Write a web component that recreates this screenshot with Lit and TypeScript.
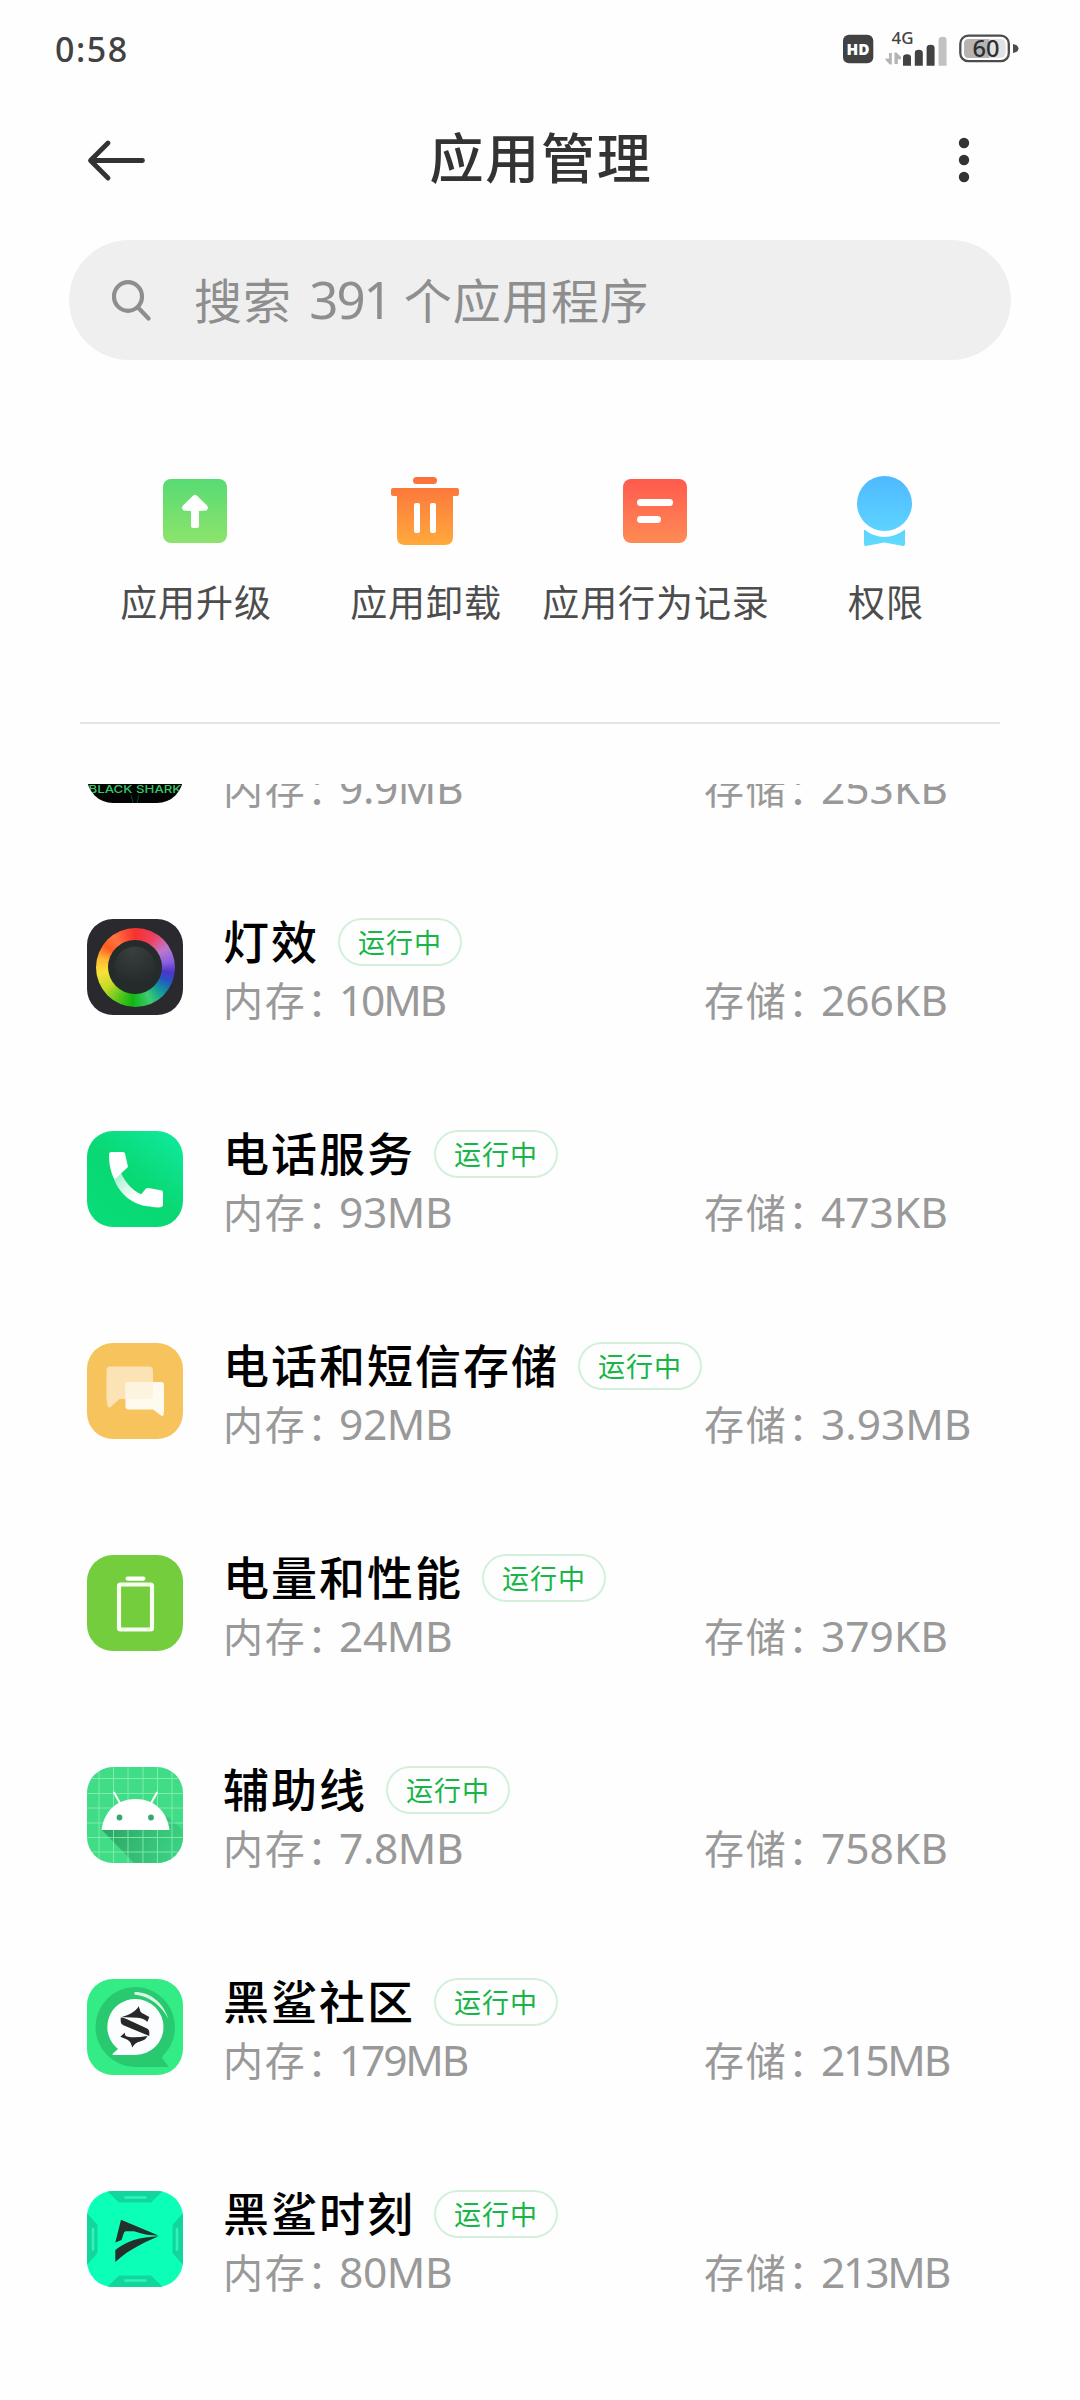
import { LitElement, html, css, svg, nothing } from "lit";
import { customElement, property } from "lit/decorators.js";

interface AppInfo {
  icon: string;
  name: string;
  memory: string;
  storage: string;
}

const APPS: AppInfo[] = [
  { icon: "shark", name: "", memory: "9.9MB", storage: "253KB" },
  { icon: "light", name: "灯效", memory: "10MB", storage: "266KB" },
  { icon: "phone", name: "电话服务", memory: "93MB", storage: "473KB" },
  { icon: "message", name: "电话和短信存储", memory: "92MB", storage: "3.93MB" },
  { icon: "battery", name: "电量和性能", memory: "24MB", storage: "379KB" },
  { icon: "android", name: "辅助线", memory: "7.8MB", storage: "758KB" },
  { icon: "community", name: "黑鲨社区", memory: "179MB", storage: "215MB" },
  { icon: "moment", name: "黑鲨时刻", memory: "80MB", storage: "213MB" },
];

const ICONS: Record<string, unknown> = {
  shark: svg`
    <rect width="96" height="96" fill="#020403"/>
    <path d="M44 88 L46 96 M52 88 L50 96" stroke="#0d4a20" stroke-width="1"/>
    <text x="48" y="86" text-anchor="middle" textLength="93" lengthAdjust="spacingAndGlyphs"
      font-family="Inter, sans-serif" font-weight="500" font-size="11" fill="#35c765">BLACK SHARK</text>`,
  light: svg`
    <defs>
      <radialGradient id="knob" cx="0.45" cy="0.1" r="0.8">
        <stop offset="0" stop-color="#393e3f"/><stop offset="1" stop-color="#252b2c"/>
      </radialGradient>
    </defs>
    <circle cx="48" cy="48" r="27" fill="#252a2b"/>
    <circle cx="48" cy="48" r="20.500" fill="url(#knob)"/>`,
  phone: svg`
    <defs>
      <linearGradient id="pbg" x1="0.2" y1="1" x2="1" y2="0">
        <stop offset="0" stop-color="#08dc78"/><stop offset="0.45" stop-color="#09d873"/><stop offset="1" stop-color="#10eba0"/>
      </linearGradient>
      <linearGradient id="ph" x1="30" y1="44" x2="50" y2="64" gradientUnits="userSpaceOnUse">
        <stop offset="0" stop-color="#a5f0d0"/><stop offset="1" stop-color="#fff"/>
      </linearGradient>
    </defs>
    <rect width="96" height="96" fill="url(#pbg)"/>
    <path d="M27 48 L34 42 C38 51 45 59 54 63.500 L62 75.500 C45 74 32 62 27 48Z" fill="url(#ph)"/>
    <path d="M24.500 21 Q22 21 22 23.500 C22 33 23.500 41 27.500 48.500 L41 36 L38 22.500 Q37.600 21 36 21Z" fill="#fff"/>
    <path d="M54 63.500 L59 57.500 Q60 56.600 61.500 57 L74 59.200 Q76 59.700 76 61.500 V74 Q76 76 73.500 76.300 Q66 76.800 59.500 74.500 L48 60Z" fill="#fff"/>`,
  message: svg`
    <rect width="96" height="96" fill="#f6c35c"/>
    <path d="M23 23.500 H62 Q66 23.500 66 27.500 V52 Q66 56 62 56 H32.500 L23 64.500 Q21 65 20.300 62 L19.500 55 V27.500 Q19.500 23.500 23 23.500Z" fill="#fbe3b5"/>
    <path d="M41.500 39 H74 Q77 39 77 42 L77 66 Q77 75 74.500 72.700 L66 66.500 H41.500 Q38.500 66.500 38.500 63.500 V42 Q38.500 39 41.500 39Z" fill="#fefaf0"/>
    <path d="M41.500 39 H66 V52 Q66 56 62 56 H38.500 V42 Q38.500 39 41.500 39Z" fill="#fdf4e0"/>`,
  battery: svg`
    <rect width="96" height="96" fill="#73cd3c"/>
    <rect x="38.500" y="21.500" width="20" height="4.200" rx="2.100" fill="#fff"/>
    <rect x="32" y="29.500" width="33" height="45" rx="1.500" fill="none" stroke="#f8fff2" stroke-width="4.200"/>`,
  android: svg`
    <defs><linearGradient id="ash" x1="20" y1="64" x2="80" y2="96" gradientUnits="userSpaceOnUse">
      <stop offset="0" stop-color="#2ea866"/><stop offset="1" stop-color="#3bd081"/>
    </linearGradient></defs>
    <rect width="96" height="96" fill="#40dc86"/>
    <path d="M15 63 L81 50 L96 63 V96 H47Z" fill="url(#ash)"/>
    <path d="M12 0V96M26.500 0V96M41 0V96M56 0V96M70.500 0V96M85 0V96M0 11.500H96M0 26.500H96M0 41H96M0 56H96M0 70.500H96M0 85H96" stroke="#8df0b8" stroke-width="1" opacity="0.8"/>
    <path d="M27 25.500 L34 38 M70 25.500 L63 38" stroke="#fff" stroke-width="2" stroke-linecap="round"/>
    <path d="M14.500 63 C17 44 30 32 48.500 32 C67 32 80 44 82.500 63Z" fill="#fff"/>
    <circle cx="32.500" cy="50.500" r="2.900" fill="#37a86c"/><circle cx="64" cy="50.500" r="2.900" fill="#37a86c"/>`,
  community: svg`
    <rect width="96" height="96" fill="#33ec85"/>
    <path d="M48.500 8 A40 40 0 0 1 76.500 76 L75 79 L82 88 H48.500 A40 40 0 0 1 48.500 8Z" fill="#28c96f"/>
    <path d="M47.500 13 C63 13 76 23 81.500 40 C74 26 62 17 47.500 15.500Z" fill="#d8fbe6"/>
    <path d="M48.500 20 A28 28 0 1 1 48.500 76 H26 Q25 75.500 26 74.500 L31 70 A28 28 0 0 1 48.500 20Z" fill="#fbfdff"/>
    <path d="M35 38 C40 36.500 49 33 51.700 27.300 L53 31 Q53 33 55 34 L62.300 38 L60.300 43 Q58 39.500 50.300 38.800 Q43 38 35 38.300Z" fill="#252a29"/>
    <path d="M33.700 38.600 Q37 38.800 40 40.300 L59 49 Q62.300 50.500 62.300 53 V57 L37 46.500 Q33.700 45 33.700 42Z" fill="#252a29"/>
    <path d="M33.300 57.700 L38 53.500 Q37 57 41 57.700 Q48 59 60.500 57 Q59 61 53 62.500 Q48 63.500 45.300 68.500 L43.700 64 Q43 62 40 60.500Z" fill="#252a29"/>`,
  moment: svg`
    <rect width="96" height="96" fill="#0cffb6"/>
    <path d="M20 0H76L64 11.500H32Z M20 96H76L64 84.500H32Z M0 22L10.500 34V62L0 74Z M96 22L85.500 34V62L96 74Z" fill="#12d69b"/>
    <path d="M38.500 6.500H58.500M38.500 89.500H58.500M6 38V58.500M90 38V58.500" stroke="#31f2bd" stroke-width="2.600" stroke-linecap="round"/>
    <path d="M34 28.700 L71.500 44.500 Q58 44.500 47 40.300 H38.700 Q37 40.500 36.500 43 L34.500 49 L28.300 51.500Z" fill="#23302c"/>
    <path d="M28.300 59 Q44 46 71.500 45.200 C60 50.500 43 57 28.300 71Z" fill="#23302c"/>`,
};

const SANS = css`"Noto Sans", "Noto Sans CJK SC", sans-serif`;
const CJK = css`"Noto Sans CJK SC", "Noto Sans", sans-serif`;

@customElement("app-icon")
export class AppIcon extends LitElement {
  @property() name = "";

  static styles = css`
    :host { display: block; flex: none; width: 96px; height: 96px; }
    .tile { display: grid; width: 96px; height: 96px; border-radius: 26px; overflow: hidden; }
    .tile > * { grid-area: 1 / 1; }
    .light { background: #29292e; }
    .ring {
      place-self: center; width: 79px; height: 79px; border-radius: 50%;
      background: conic-gradient(#f5322f 0deg, #ee4060 30deg, #bb78cc 58deg, #8a62dd 80deg, #4d35c8 98deg, #2853c4 112deg, #109a9a 133deg, #3fcc70 156deg, #10b512 185deg, #5cc81c 210deg, #c6da28 235deg, #f8e23a 262deg, #ffb733 285deg, #ff5a22 305deg, #ff7440 325deg, #fb4a35 345deg, #f5322f 360deg);
    }
    svg { display: block; }
  `;

  render() {
    return html`<div class="tile ${this.name}">
      ${this.name === "light" ? html`<div class="ring"></div>` : nothing}
      <svg width="96" height="96" viewBox="0 0 96 96">${ICONS[this.name]}</svg>
    </div>`;
  }
}

@customElement("app-row")
export class AppRow extends LitElement {
  @property({ attribute: false }) app!: AppInfo;

  static styles = css`
    :host { display: flex; align-items: center; height: 212px; padding: 0 80px 0 87px; box-sizing: border-box; }
    .body { flex: 1; margin-left: 40px; padding-top: 11px; }
    .head { display: flex; align-items: flex-start; height: 50px; gap: 18px; }
    .name { font: 500 46px/46px ${CJK}; letter-spacing: 2px; color: #000; white-space: nowrap; }
    .badge {
      display: flex; align-items: center; justify-content: center; margin: 2px 0 0 1px;
      width: 124px; height: 48px; box-sizing: border-box; border: 2px solid #d2f0dc; border-radius: 24px;
      font: 400 27px/44px ${CJK}; letter-spacing: 1px; color: #18b648;
    }
    .stats { display: grid; grid-template-columns: 481px 1fr; margin-top: 3px; }
    .stat { display: flex; align-items: baseline; height: 60px; color: #999; white-space: nowrap; }
    .label { width: 84px; font: 400 40px/60px ${CJK}; letter-spacing: 1.700px; }
    .colon { width: 32px; font: 400 40px/60px ${CJK}; font-feature-settings: "halt"; }
    .value { font: 400 42.500px/60px ${SANS}; letter-spacing: -0.400px; }
    .storage .value { margin-left: 1px; letter-spacing: 0; }
    .stat .narrow { letter-spacing: -2.200px; }
  `;

  private stat(kind: string, label: string, value: string) {
    return html`<div class="stat ${kind}">
      <span class="label">${label}</span><span class="colon">：</span>
      <span class="value ${value.includes("1") ? "narrow" : ""}">${value}</span>
    </div>`;
  }

  render() {
    const { icon, name, memory, storage } = this.app;
    return html`
      <app-icon name=${icon}></app-icon>
      <div class="body">
        <div class="head">
          ${name ? html`<span class="name">${name}</span><span class="badge">运行中</span>` : nothing}
        </div>
        <div class="stats">${this.stat("memory", "内存", memory)}${this.stat("storage", "存储", storage)}</div>
      </div>`;
  }
}

const gradient = (id: string, from: string, to: string) => svg`
  <defs><linearGradient id=${id} x1="0" y1="4" x2="0" y2="74" gradientUnits="userSpaceOnUse">
    <stop offset="0" stop-color=${from}/><stop offset="1" stop-color=${to}/>
  </linearGradient></defs>`;

const ACTIONS = [
  {
    label: "应用升级",
    art: svg`${gradient("g1", "#55da74", "#8ee46c")}
      <rect x="8" y="8" width="64" height="64" rx="8" fill="url(#g1)"/>
      <path d="M38 24.700 Q40 22.800 42 24.700 L52 34.500 Q54 37 51.500 39.500 L44 40 V55 Q44 57 42 57 H38 Q36 57 36 55 V40 L28.500 39.500 Q26 37 28 34.500Z" fill="#fff"/>`,
  },
  {
    label: "应用卸载",
    art: svg`${gradient("g2", "#fb6d3c", "#ffaa3c")}
      <rect x="28" y="6" width="24" height="7" rx="3.500" fill="url(#g2)"/>
      <path d="M8 17H72Q74 17 74 19V23Q74 25 72 25H68V66Q68 74 60 74H20Q12 74 12 66V25H8Q6 25 6 23V19Q6 17 8 17Z" fill="url(#g2)"/>
      <rect x="29" y="32" width="6" height="30" rx="2" fill="#fff"/><rect x="45" y="32" width="6" height="30" rx="2" fill="#fff"/>`,
  },
  {
    label: "应用行为记录",
    art: svg`${gradient("g3", "#ff574e", "#ff8d54")}
      <rect x="8" y="8" width="64" height="64" rx="8" fill="url(#g3)"/>
      <rect x="22" y="28" width="36" height="7" rx="3.500" fill="#fff"/><rect x="22" y="45" width="24" height="7" rx="3.500" fill="#fff"/>`,
  },
  {
    label: "权限",
    art: svg`${gradient("g4", "#4fb8ff", "#60dbff")}
      <circle cx="39.500" cy="32.500" r="27.500" fill="url(#g4)"/>
      <path d="M19 58.500 Q29 66 39.500 66 Q50 66 60 58.500 V73 Q60 75.200 58 75 L39.500 71.500 L21 75 Q19 75.200 19 73Z" fill="url(#g4)"/>`,
  },
];

@customElement("app-root")
export class AppRoot extends LitElement {
  static styles = css`
    :host { display: block; width: 1080px; height: 2400px; overflow: hidden; background: #fefefe; font-family: ${CJK}; }
    .status { display: flex; justify-content: space-between; height: 100px; padding: 0 60px 0 55px; }
    .clock { margin-top: 24px; font: 500 34px/50px ${SANS}; letter-spacing: 1.500px; color: #424242; }
    .bar { display: grid; grid-template-columns: 80px 1fr 80px; align-items: center; height: 120px; padding: 0 80px; }
    .title { font-weight: 500; font-size: 54px; line-height: 80px; letter-spacing: 1.800px; text-align: center; color: #333; padding: 0 0 8px 2px; }
    .bar svg { display: block; }
    .search {
      display: flex; align-items: center; height: 120px; margin: 20px 69px 0; padding-left: 43px;
      box-sizing: border-box; border-radius: 60px; background: #efefef;
      font-size: 48px; line-height: 70px; letter-spacing: 1.100px; color: #8e8e8e;
    }
    .query { display: flex; align-items: baseline; margin-left: 42px; padding-bottom: 3px; }
    .count { font: 400 51px/70px ${SANS}; letter-spacing: -2px; margin: 0 13px 0 17px; }
    .actions { display: grid; grid-template-columns: repeat(4, 230px); height: 362px; padding: 111px 80px 0; box-sizing: border-box; }
    .action { display: flex; flex-direction: column; align-items: center; }
    .action svg { flex: none; }
    .caption { margin-top: 23px; padding-left: 2px; font-size: 37px; line-height: 54px; letter-spacing: 0.900px; color: #4d4d4d; white-space: nowrap; }
    .divider { height: 2px; margin: 0 80px; background: #e5e5e5; }
    .list { height: 1616px; margin-top: 60px; overflow: hidden; }
    .rows { display: flex; flex-direction: column; margin-top: -135px; }
  `;

  render() {
    return html`
      <div class="status">
        <div class="clock">0:58</div>
        <svg width="180" height="80" viewBox="840 0 180 80">
          <rect x="843" y="34.700" width="30.300" height="28.600" rx="6" fill="#424242"/>
          <text x="858" y="54.500" text-anchor="middle" textLength="23" lengthAdjust="spacingAndGlyphs" font-family="Open Sans, sans-serif" font-weight="800" font-size="16" fill="#fff">HD</text>
          <text x="891.500" y="44" textLength="22" lengthAdjust="spacingAndGlyphs" font-family="Noto Sans, sans-serif" font-weight="500" font-size="15.500" fill="#424242">4G</text>
          <path d="M889 53h2.800v11.500h-2L885.500 60v-1.500H889Z M894.500 52.500h2L901 57v2.200h-3.200V64h-3.300Z" fill="#b4b4b4"/>
          <path d="M903 65.700V57.500q0-3.300 4-3.300t4 3.300v8.200Z M914.800 65.700V53q0-3.300 4-3.300t4 3.300v12.700Z M926.600 65.700V48q0-3.300 4-3.300t4 3.300v17.700Z" fill="#424242"/>
          <path d="M938.600 65.700V40q0-3.300 4-3.300t4 3.300v25.700Z" fill="#c2c2c2"/>
          <rect x="960.300" y="35.700" width="48.500" height="25.500" rx="8" fill="#fff" stroke="#4c4c4c" stroke-width="2.300"/>
          <rect x="964" y="39" width="41.500" height="19" rx="5" fill="#e2e2e2"/>
          <path d="M989 39V58H969q-5 0-5-5V44q0-5 5-5Z" fill="#b4b4b4"/>
          <path d="M1013 44q5.500 1 5.500 4.500t-5.500 4.500Z" fill="#4c4c4c"/>
          <text x="986" y="57" text-anchor="middle" textLength="27" lengthAdjust="spacingAndGlyphs" font-family="Noto Sans, sans-serif" font-weight="500" font-size="23.500" fill="#2e2e2e">60</text>
        </svg>
      </div>
      <div class="bar">
        <svg width="80" height="60" viewBox="0 0 80 60">
          <path d="M62.500 30.500H11 M28 13L10.500 30.500L28 48" fill="none" stroke="#333" stroke-width="4.800" stroke-linecap="round" stroke-linejoin="round"/>
        </svg>
        <div class="title">应用管理</div>
        <svg width="80" height="60" viewBox="0 0 80 60" fill="#333">
          <circle cx="44" cy="13" r="5.200"/><circle cx="44" cy="30" r="5.200"/><circle cx="44" cy="47" r="5.200"/>
        </svg>
      </div>
      <div class="search">
        <svg width="40" height="42" viewBox="0 0 40 42" fill="none" stroke="#8e8e8e" stroke-width="4.200" stroke-linecap="round">
          <ellipse cx="16" cy="17.500" rx="14" ry="14.300"/><path d="M26.500 29L36.500 39.500"/>
        </svg>
        <div class="query"><span>搜索</span><span class="count">391</span><span>个应用程序</span></div>
      </div>
      <div class="actions">
        ${ACTIONS.map((a) => html`<div class="action">
          <svg width="80" height="80" viewBox="0 0 80 80">${a.art}</svg>
          <span class="caption">${a.label}</span>
        </div>`)}
      </div>
      <div class="divider"></div>
      <div class="list">
        <div class="rows">${APPS.map((app) => html`<app-row .app=${app}></app-row>`)}</div>
      </div>`;
  }
}
